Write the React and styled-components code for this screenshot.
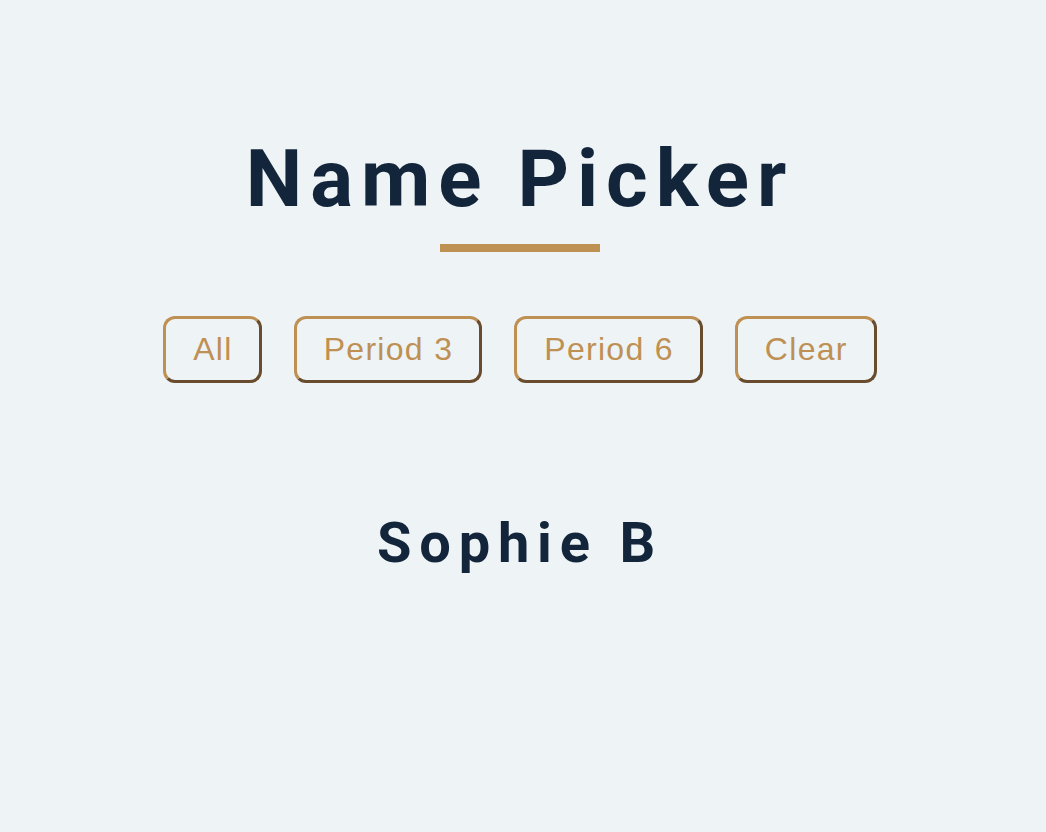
import React, { useState } from 'react'
import styled, { createGlobalStyle } from 'styled-components'

const gold = '#bf9053'
const brown = '#684c2d'
const navy = '#12253b'

const GlobalStyle = createGlobalStyle`
    html, body {
        margin: 0;
        padding: 0;
        background: #eef3f6;
    }
`

const Page = styled.main`
    display: flex;
    flex-direction: column;
    align-items: center;
    padding: 132px 6px 0 0;
    min-height: 832px;
    box-sizing: border-box;
`

const Title = styled.h1`
    margin: 0;
    font-family: Roboto, "Noto Sans", sans-serif;
    font-weight: 700;
    font-size: 80px;
    letter-spacing: 8px;
    color: ${navy};
`

const Underline = styled.div`
    width: 160px;
    height: 8px;
    margin-top: 18px;
    background: ${gold};
`

const Buttons = styled.div`
    display: flex;
    gap: 32px;
    margin-top: 64px;
`

const Button = styled.button`
    font-family: "Liberation Sans", Arial, sans-serif;
    font-size: 32px;
    letter-spacing: 1.3px;
    color: ${gold};
    background: transparent;
    border: 3px solid;
    border-color: ${gold} ${brown} ${brown} ${gold};
    border-radius: 12px;
    padding: 12px 26px 12px 27px;
    cursor: pointer;
`

const Picked = styled.h2`
    margin: 127px 0 0;
    font-family: Roboto, "Noto Sans", sans-serif;
    font-weight: 700;
    font-size: 56px;
    letter-spacing: 7.8px;
    color: ${navy};
`

const App = () => {
    const [name] = useState('Sophie B')
    return (
        <>
            <GlobalStyle />
            <Page>
                <Title>Name Picker</Title>
                <Underline />
                <Buttons>
                    <Button>All</Button>
                    <Button>Period 3</Button>
                    <Button>Period 6</Button>
                    <Button>Clear</Button>
                </Buttons>
                <Picked>{name}</Picked>
            </Page>
        </>
    )
}

export default App
